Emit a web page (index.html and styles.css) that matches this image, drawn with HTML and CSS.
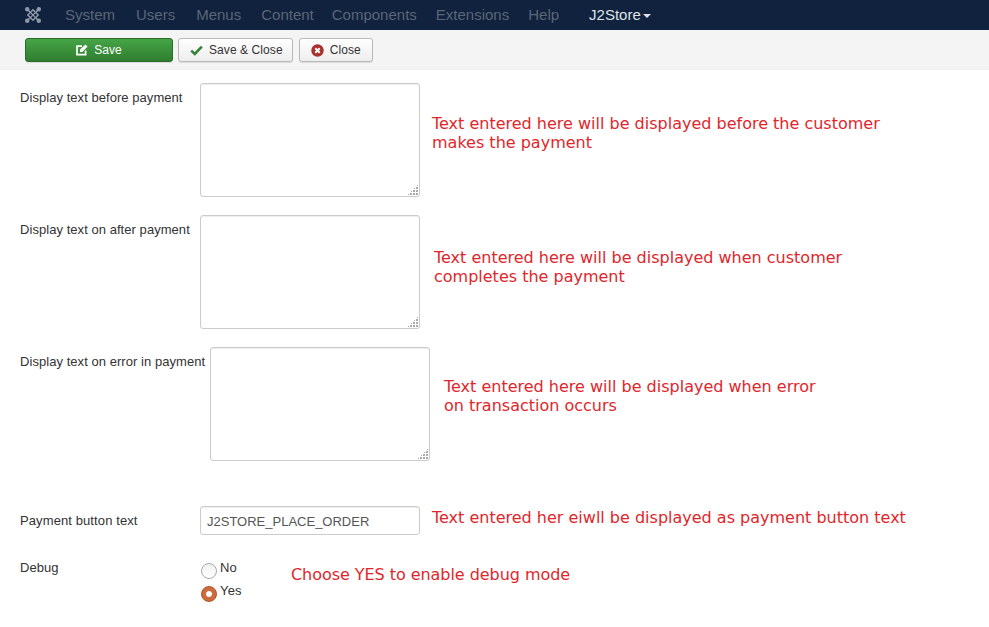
FILE: index.html
```html
<!DOCTYPE html>
<html lang="en">
<head>
<meta charset="utf-8">
<title>J2Store payment settings</title>
<link rel="stylesheet" href="styles.css">
</head>
<body>
<nav class="navbar">
  <svg class="logo" width="18" height="18" viewBox="0 0 18 18" aria-hidden="true">
    <g fill="none" stroke="#8f9aa9" stroke-width="1.5">
      <path d="M3 3 L6 6 M15 3 L12 6 M3 15 L6 12 M15 15 L12 12"/>
      <path d="M9 3.8 L14.2 9 L9 14.2 L3.8 9 Z"/>
      <path d="M6.5 6.5 L11.5 11.5 M11.5 6.5 L6.5 11.5" stroke-width="1.1"/>
    </g>
    <g fill="#8f9aa9"><circle cx="3.2" cy="3.2" r="2.2"/><circle cx="14.8" cy="3.2" r="2.2"/><circle cx="3.2" cy="14.8" r="2.2"/><circle cx="14.8" cy="14.8" r="2.2"/></g>
  </svg>
  <a class="nav-item nav-wide">System</a>
  <a class="nav-item nav-wide">Users</a>
  <a class="nav-item">Menus</a>
  <a class="nav-item nav-tight">Content</a>
  <a class="nav-item nav-snug">Components</a>
  <a class="nav-item nav-snug">Extensions</a>
  <a class="nav-item">Help</a>
  <a class="nav-item nav-active">J2Store<span class="caret"></span></a>
</nav>
<div class="toolbar">
  <button class="btn btn-save">
    <svg width="12" height="12" viewBox="0 0 12 12" aria-hidden="true"><path d="M9.6 6.5V10.6H1V2.2h5" fill="none" stroke="#fff" stroke-width="1.7"/><path d="M4 5.6 L4 8 L6.4 8 L11.6 2.6 L9.4 0.4 Z" fill="#fff"/></svg>
    Save
  </button>
  <button class="btn">
    <svg width="13" height="11" viewBox="0 0 13 11" aria-hidden="true"><path d="M1.2 5.6 L4.8 9 L11.8 1.6" fill="none" stroke="#378137" stroke-width="2.6"/></svg>
    Save &amp; Close
  </button>
  <button class="btn btn-close">
    <svg width="13" height="13" viewBox="0 0 13 13" aria-hidden="true"><circle cx="6.5" cy="6.5" r="6.2" fill="#a8302d"/><path d="M4.3 4.3 L8.7 8.7 M8.7 4.3 L4.3 8.7" stroke="#fff" stroke-width="2"/></svg>
    Close
  </button>
</div>
<main class="form">
  <div class="row row-area">
    <label class="label">Display text before payment</label>
    <div class="area-wrap"><textarea class="area"></textarea></div>
    <p class="note note-a">Text entered here will be displayed before the customer<br>makes the payment</p>
  </div>
  <div class="row row-area">
    <label class="label">Display text on after payment</label>
    <div class="area-wrap"><textarea class="area"></textarea></div>
    <p class="note note-b">Text entered here will be displayed when customer<br>completes the payment</p>
  </div>
  <div class="row row-area">
    <label class="label label-wide">Display text on error in payment</label>
    <div class="area-wrap"><textarea class="area"></textarea></div>
    <p class="note note-c">Text entered here will be displayed when error<br>on transaction occurs</p>
  </div>
  <div class="row row-input">
    <label class="label">Payment button text</label>
    <input class="input" type="text" value="J2STORE_PLACE_ORDER">
    <p class="note note-d">Text entered her eiwll be displayed as payment button text</p>
  </div>
  <div class="row row-debug">
    <span class="label">Debug</span>
    <div class="radios">
      <label class="radio"><span class="dot"></span>No</label>
      <label class="radio"><span class="dot dot-on"></span>Yes</label>
    </div>
    <p class="note note-e">Choose YES to enable debug mode</p>
  </div>
</main>
</body>
</html>
```
FILE: styles.css
```css
* { box-sizing: border-box; }
html, body { margin: 0; padding: 0; }
body {
  background: #fff;
  font-family: "Liberation Sans", Arial, sans-serif;
  font-size: 13px;
  color: #333;
  width: 989px;
  height: 627px;
  overflow: hidden;
}
.navbar {
  height: 30px;
  background: #10223e;
  display: flex;
  align-items: center;
  padding: 0 0 1px 24px;
  font-size: 15px;
}
.logo { margin-right: 23px; }
.nav-item { color: #5b6676; margin-right: 20px; line-height: 28px; }
.nav-wide { margin-right: 21px; }
.nav-tight { margin-right: 18px; }
.nav-snug { margin-right: 19px; }
.nav-active { color: #dfe2e6; margin-left: 10px; }
.caret {
  display: inline-block;
  border-top: 4px solid #dfe2e6;
  border-left: 4px solid transparent;
  border-right: 4px solid transparent;
  margin-left: 2px;
  vertical-align: 2px;
}
.toolbar {
  height: 40px;
  background: #f4f4f4;
  border-bottom: 1px solid #f0f0f0;
  display: flex;
  align-items: flex-start;
  gap: 6px;
  padding: 8px 0 0 25px;
}
.toolbar .btn-save { margin-right: -1px; }
.btn {
  height: 24px;
  padding: 0 9px 0 11px;
  display: inline-flex;
  align-items: center;
  justify-content: center;
  gap: 6px;
  font-family: inherit;
  font-size: 12px;
  letter-spacing: .08px;
  color: #333;
  background: linear-gradient(#ffffff, #ededed);
  border: 1px solid #b9b9b9;
  border-radius: 3px;
  box-shadow: 0 1px 1px rgba(0,0,0,.1);
}
.btn-save {
  width: 148px;
  padding: 0;
  color: #fff;
  background: linear-gradient(#46a546, #2f7d2f);
  border-color: #2a6b2a;
}
.btn-close { padding-right: 11px; }
.form { padding: 13px 0 0 20px; }
.row { display: flex; align-items: flex-start; }
.row-area { height: 132px; }
.label { min-width: 180px; padding-top: 7px; line-height: 15px; letter-spacing: .05px; color: #333; }
.label-wide { min-width: 190px; }
.area-wrap { position: relative; width: 220px; height: 114px; }
.area-wrap::after {
  content: "";
  position: absolute;
  right: 1px;
  bottom: 1px;
  width: 11px;
  height: 11px;
  background-image: radial-gradient(circle at 1px 1px, #aaa 0 1px, transparent 1.3px);
  background-size: 3px 3px;
  background-position: right bottom;
  -webkit-mask-image: linear-gradient(135deg, transparent 45%, #000 45%);
  mask-image: linear-gradient(135deg, transparent 45%, #000 45%);
}
.area {
  display: block;
  width: 220px;
  height: 114px;
  resize: none;
  background: #fff;
  border: 1px solid #ccc;
  border-radius: 3px;
  box-shadow: inset 0 1px 1px rgba(0,0,0,.075);
  margin: 0;
}
.note {
  margin: 0;
  font-family: "DejaVu Sans", sans-serif;
  font-size: 16px;
  line-height: 19px;
  color: #e1262b;
}
.note-a { margin: 31px 0 0 12px; }
.note-b { margin: 33px 0 0 14px; }
.note-c { margin: 30px 0 0 14px; }
.note-d { margin: 2px 0 0 12px; }
.note-e { margin: 5px 0 0 47px; letter-spacing: -.05px; }
.row-input { margin-top: 27px; height: 54px; }
.row-input .label { padding-top: 7px; letter-spacing: .1px; }
.input {
  width: 220px;
  height: 29px;
  margin: 0;
  padding: 1px 6px 0;
  font-family: "Liberation Sans", Arial, sans-serif;
  font-size: 13px;
  color: #555;
  background: #fff;
  border: 1px solid #ccc;
  border-radius: 3px;
  box-shadow: inset 0 1px 1px rgba(0,0,0,.075);
}
.row-debug .label { padding-top: 0; }
.radios { display: flex; flex-direction: column; gap: 7px; width: 43px; margin-left: 1px; }
.radio { display: flex; align-items: flex-start; gap: 3px; line-height: 15px; height: 16px; letter-spacing: .2px; }
.dot {
  width: 16px;
  height: 16px;
  margin-top: 3px;
  border-radius: 50%;
  border: 1px solid #aaa;
  background: linear-gradient(#f0f0f0, #fff);
  flex: none;
}
.dot-on {
  border: 1px solid #a9542b;
  background: radial-gradient(circle, #fff 0 2.5px, #cf6a3c 3.5px);
}
```
